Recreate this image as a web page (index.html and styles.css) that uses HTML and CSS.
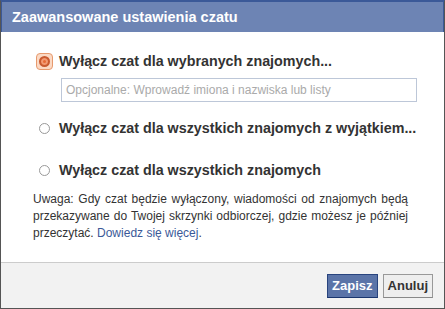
FILE: index.html
```html
<!DOCTYPE html>
<html lang="pl">
<head>
    <meta charset="UTF-8">
    <title>Zaawansowane ustawienia czatu</title>
    <link rel="stylesheet" href="styles.css">
</head>
<body>
    <div class="dialog">
        <div class="dialog-title">Zaawansowane ustawienia czatu</div>
        <div class="dialog-body">
            <div class="option">
                <span class="radio radio-checked"></span>
                <span class="option-label">Wyłącz czat dla wybranych znajomych...</span>
            </div>
            <div class="field">Opcjonalne: Wprowadź imiona i nazwiska lub listy</div>
            <div class="option option-second">
                <span class="radio"></span>
                <span class="option-label">Wyłącz czat dla wszystkich znajomych z wyjątkiem...</span>
            </div>
            <div class="option option-third">
                <span class="radio"></span>
                <span class="option-label">Wyłącz czat dla wszystkich znajomych</span>
            </div>
            <p class="note">Uwaga: Gdy czat będzie wyłączony, wiadomości od znajomych będą przekazywane do Twojej skrzynki odbiorczej, gdzie możesz je później przeczytać. <a href="#">Dowiedz się więcej</a>.</p>
        </div>
        <div class="dialog-footer">
            <button class="btn btn-primary">Zapisz</button>
            <button class="btn">Anuluj</button>
        </div>
    </div>
</body>
</html>
```

FILE: styles.css
```css
body {
    margin: 0;
    font-family: "Liberation Sans", Arial, sans-serif;
    background: #fff;
}
.dialog {
    width: 443px;
    height: 307px;
    border: 1px solid #555;
    border-top-color: #3b5998;
    display: flex;
    flex-direction: column;
}
.dialog-title {
    background-color: #6d84b4;
    border: 1px solid #3b5998;
    border-bottom: none;
    color: white;
    font-size: 14.5px;
    font-weight: bold;
    padding: 6px 10px 6px;
    height: 18px;
    line-height: 18px;
}
.dialog-body {
    flex: 1;
    padding: 20px 10px 0 38px;
}
.option {
    display: flex;
    align-items: center;
    height: 18px;
}
.option-second {
    margin-top: 17px;
}
.option-third {
    margin-top: 24px;
}
.radio {
    width: 11px;
    height: 11px;
    border: 1px solid #999;
    border-radius: 50%;
    margin-right: 9px;
    box-sizing: border-box;
    background: #fff;
}
.radio-checked {
    width: 17px;
    height: 17px;
    margin-left: -3px;
    margin-right: 6px;
    border: 1px solid #e79a6e;
    border-radius: 4px;
    background: #fbd9c4;
    position: relative;
}
.radio-checked::after {
    content: "";
    position: absolute;
    left: 2px;
    top: 2px;
    width: 7px;
    height: 7px;
    border-radius: 50%;
    border: 2px solid #c85a30;
    background: #e66a36;
    box-shadow: inset 0 0 0 2px #f29a73;
}
.option-label {
    font-size: 14.3px;
    font-weight: bold;
    color: #333;
    white-space: nowrap;
}
.field {
    margin: 8px 0 0 22px;
    width: 350px;
    height: 22px;
    border: 1px solid #bdc7d8;
    font-size: 12px;
    color: #aaa;
    line-height: 22px;
    padding-left: 4px;
}
.note {
    margin: 12px 26px 0 -6px;
    font-size: 12px;
    line-height: 17px;
    color: #333;
    text-align: justify;
}
.note a {
    color: #3b5998;
    text-decoration: none;
}
.dialog-footer {
    background-color: #f2f2f2;
    border-top: 1px solid #ccc;
    height: 45px;
    display: flex;
    justify-content: flex-end;
    align-items: center;
    gap: 5px;
    padding-right: 11px;
}
.btn {
    font-family: "Liberation Sans", Arial, sans-serif;
    font-size: 13px;
    font-weight: bold;
    height: 24px;
    padding: 0 4px;
    border: 1px solid #999;
    border-bottom-color: #888;
    background: #eee;
    color: #333;
    cursor: pointer;
}
.btn-primary {
    background: #5b74a8;
    border-color: #29447e #29447e #1a356e;
    color: white;
}
```
